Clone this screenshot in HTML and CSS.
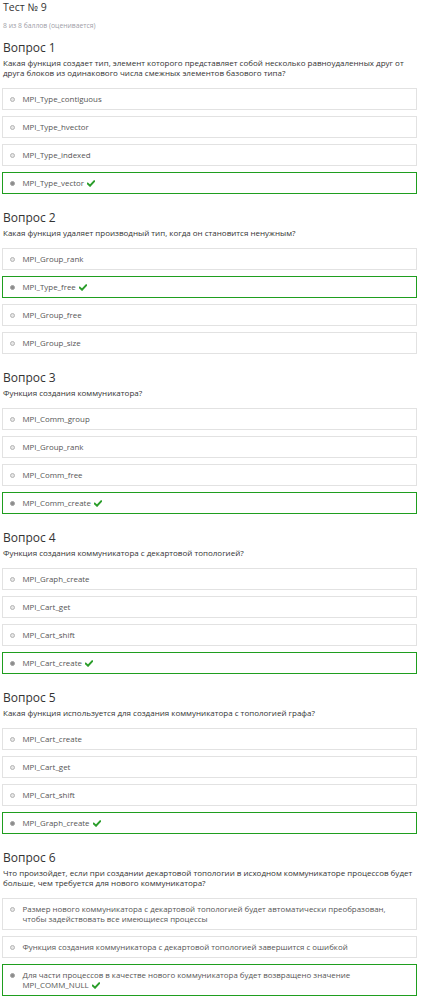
FILE: index.html
```html
<!DOCTYPE html>
<html lang="ru">
<head>
<meta charset="utf-8">
<title>Тест № 9</title>
<link rel="stylesheet" href="styles.css">
</head>
<body>
<div class="page">
  <h1 class="title">Тест № 9</h1>
  <div class="score">8 из 8 баллов (оценивается)</div>

  <section class="question">
    <h2 class="q-head">Вопрос 1</h2>
    <p class="q-text">Какая функция создает тип, элемент которого представляет собой несколько равноудаленных друг от<br>друга блоков из одинакового числа смежных элементов базового типа?</p>
    <div class="answer"><span class="radio"></span><span class="a-text">MPI_Type_contiguous</span></div>
    <div class="answer"><span class="radio"></span><span class="a-text">MPI_Type_hvector</span></div>
    <div class="answer"><span class="radio"></span><span class="a-text">MPI_Type_indexed</span></div>
    <div class="answer correct"><span class="radio checked"></span><span class="a-text">MPI_Type_vector <svg class="check" viewBox="0 0 10 8"><path d="M1 4.2 L3.8 6.8 L9 1.2"/></svg></span></div>
  </section>

  <section class="question">
    <h2 class="q-head">Вопрос 2</h2>
    <p class="q-text">Какая функция удаляет производный тип, когда он становится ненужным?</p>
    <div class="answer"><span class="radio"></span><span class="a-text">MPI_Group_rank</span></div>
    <div class="answer correct"><span class="radio checked"></span><span class="a-text">MPI_Type_free <svg class="check" viewBox="0 0 10 8"><path d="M1 4.2 L3.8 6.8 L9 1.2"/></svg></span></div>
    <div class="answer"><span class="radio"></span><span class="a-text">MPI_Group_free</span></div>
    <div class="answer"><span class="radio"></span><span class="a-text">MPI_Group_size</span></div>
  </section>

  <section class="question">
    <h2 class="q-head">Вопрос 3</h2>
    <p class="q-text">Функция создания коммуникатора?</p>
    <div class="answer"><span class="radio"></span><span class="a-text">MPI_Comm_group</span></div>
    <div class="answer"><span class="radio"></span><span class="a-text">MPI_Group_rank</span></div>
    <div class="answer"><span class="radio"></span><span class="a-text">MPI_Comm_free</span></div>
    <div class="answer correct"><span class="radio checked"></span><span class="a-text">MPI_Comm_create <svg class="check" viewBox="0 0 10 8"><path d="M1 4.2 L3.8 6.8 L9 1.2"/></svg></span></div>
  </section>

  <section class="question">
    <h2 class="q-head">Вопрос 4</h2>
    <p class="q-text">Функция создания коммуникатора с декартовой топологией?</p>
    <div class="answer"><span class="radio"></span><span class="a-text">MPI_Graph_create</span></div>
    <div class="answer"><span class="radio"></span><span class="a-text">MPI_Cart_get</span></div>
    <div class="answer"><span class="radio"></span><span class="a-text">MPI_Cart_shift</span></div>
    <div class="answer correct"><span class="radio checked"></span><span class="a-text">MPI_Cart_create <svg class="check" viewBox="0 0 10 8"><path d="M1 4.2 L3.8 6.8 L9 1.2"/></svg></span></div>
  </section>

  <section class="question">
    <h2 class="q-head">Вопрос 5</h2>
    <p class="q-text">Какая функция используется для создания коммуникатора с топологией графа?</p>
    <div class="answer"><span class="radio"></span><span class="a-text">MPI_Cart_create</span></div>
    <div class="answer"><span class="radio"></span><span class="a-text">MPI_Cart_get</span></div>
    <div class="answer"><span class="radio"></span><span class="a-text">MPI_Cart_shift</span></div>
    <div class="answer correct"><span class="radio checked"></span><span class="a-text">MPI_Graph_create <svg class="check" viewBox="0 0 10 8"><path d="M1 4.2 L3.8 6.8 L9 1.2"/></svg></span></div>
  </section>

  <section class="question">
    <h2 class="q-head">Вопрос 6</h2>
    <p class="q-text">Что произойдет, если при создании декартовой топологии в исходном коммуникаторе процессов будет<br>больше, чем требуется для нового коммуникатора?</p>
    <div class="answer"><span class="radio"></span><span class="a-text">Размер нового коммуникатора с декартовой топологией будет автоматически преобразован, чтобы задействовать все имеющиеся процессы</span></div>
    <div class="answer"><span class="radio"></span><span class="a-text">Функция создания коммуникатора с декартовой топологией завершится с ошибкой</span></div>
    <div class="answer correct"><span class="radio checked"></span><span class="a-text">Для части процессов в качестве нового коммуникатора будет возвращено значение MPI_COMM_NULL <svg class="check" viewBox="0 0 10 8"><path d="M1 4.2 L3.8 6.8 L9 1.2"/></svg></span></div>
  </section>
</div>
</body>
</html>
```

FILE: styles.css
```css
html, body {
  margin: 0;
  padding: 0;
  background: #ffffff;
}

body {
  font-family: "Open Sans", "Liberation Sans", sans-serif;
  color: #333333;
}

.page {
  padding: 0 6px 0 2px;
}

.title {
  margin: 0;
  padding-left: 1px;
  font-size: 10.5px;
  line-height: 15px;
  font-weight: 400;
  color: #333333;
}

.score {
  margin-top: 6px;
  padding-left: 1px;
  font-size: 6.8px;
  line-height: 9px;
  color: #a0a0a8;
}

.question {
  display: flex;
  flex-direction: column;
  gap: 6px;
  margin-top: 16px;
}

.question:first-of-type {
  margin-top: 10px;
}

.q-head {
  margin: 0;
  padding-left: 1px;
  font-size: 12px;
  line-height: 16px;
  font-weight: 400;
  color: #333333;
}

.q-text {
  margin: -4px -6px 4px 0;
  padding-left: 1px;
  font-size: 8px;
  line-height: 10px;
  color: #333333;
}

.answer {
  display: flex;
  align-items: flex-start;
  gap: 8px;
  border: 1px solid #e2e2e2;
  padding: 5px 8px 5px 6.5px;
  min-height: 10px;
}

.answer.correct {
  border-color: #1f9e1f;
}

.radio {
  flex: none;
  width: 3px;
  height: 3px;
  margin-top: 2.5px;
  border-radius: 50%;
  background: #e6e6e6;
  border: 1px solid #b4b4b4;
}

.radio.checked {
  background: #8c8c8c;
  border-color: #a0a0a0;
}

.a-text {
  font-size: 7.9px;
  line-height: 10px;
  color: #555555;
}

.check {
  display: inline-block;
  width: 8px;
  height: 7px;
  vertical-align: -1px;
  margin-left: 1px;
}

.check path {
  fill: none;
  stroke: #2a9d2a;
  stroke-width: 2.4;
  stroke-linecap: square;
}
```
